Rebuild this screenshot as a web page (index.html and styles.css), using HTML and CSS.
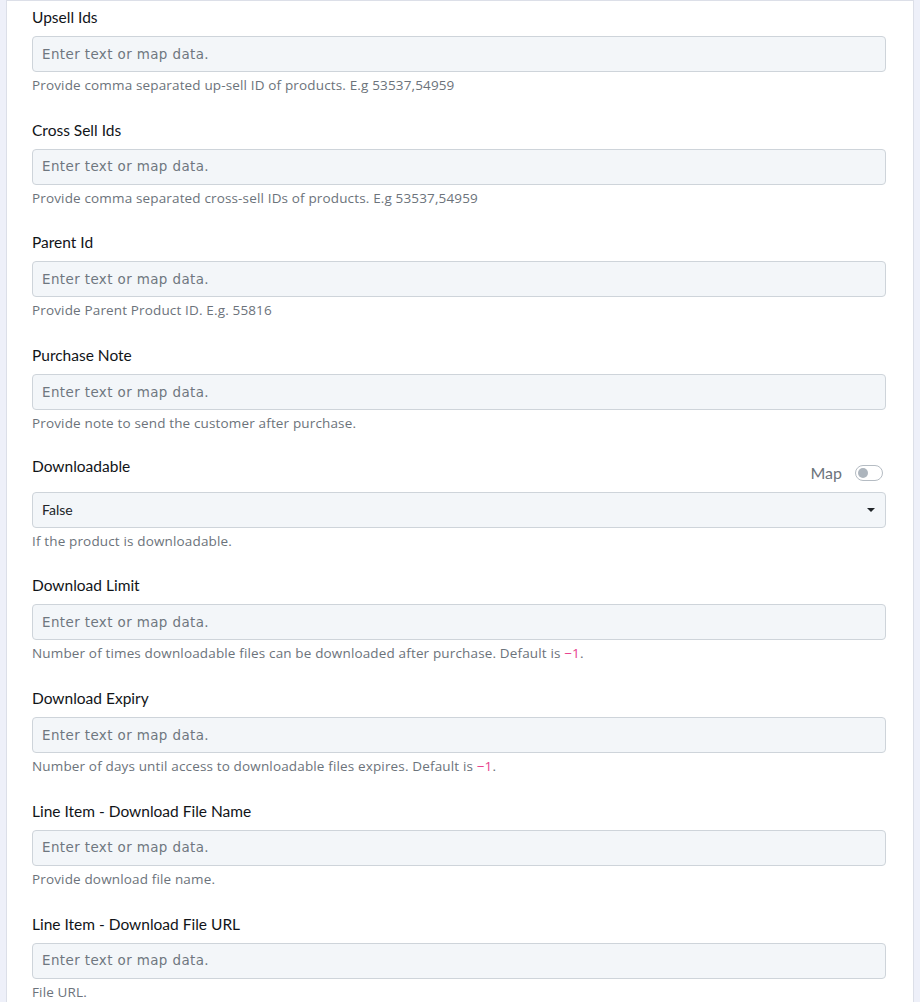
FILE: index.html
```html
<!DOCTYPE html>
<html lang="en">
<head>
<meta charset="utf-8">
<title>Product fields</title>
<link rel="stylesheet" href="styles.css">
</head>
<body>
<div class="panel">
  <form class="fields">
    <div class="field">
      <label class="field-label">Upsell Ids</label>
      <input class="field-input" type="text" placeholder="Enter text or map data.">
      <p class="field-help">Provide comma separated up-sell ID of products. E.g 53537,54959</p>
    </div>
    <div class="field">
      <label class="field-label">Cross Sell Ids</label>
      <input class="field-input" type="text" placeholder="Enter text or map data.">
      <p class="field-help">Provide comma separated cross-sell IDs of products. E.g 53537,54959</p>
    </div>
    <div class="field">
      <label class="field-label">Parent Id</label>
      <input class="field-input" type="text" placeholder="Enter text or map data.">
      <p class="field-help">Provide Parent Product ID. E.g. 55816</p>
    </div>
    <div class="field">
      <label class="field-label">Purchase Note</label>
      <input class="field-input" type="text" placeholder="Enter text or map data.">
      <p class="field-help">Provide note to send the customer after purchase.</p>
    </div>
    <div class="field field-select">
      <div class="field-head">
        <label class="field-label">Downloadable</label>
        <span class="map-switch">
          <span class="map-text">Map</span>
          <span class="switch"><span class="knob"></span></span>
        </span>
      </div>
      <div class="select-box">
        <span class="select-value">False</span>
        <span class="caret"></span>
      </div>
      <p class="field-help">If the product is downloadable.</p>
    </div>
    <div class="field">
      <label class="field-label">Download Limit</label>
      <input class="field-input" type="text" placeholder="Enter text or map data.">
      <p class="field-help">Number of times downloadable files can be downloaded after purchase. Default is <code class="code">−1</code>.</p>
    </div>
    <div class="field">
      <label class="field-label">Download Expiry</label>
      <input class="field-input" type="text" placeholder="Enter text or map data.">
      <p class="field-help">Number of days until access to downloadable files expires. Default is <code class="code">−1</code>.</p>
    </div>
    <div class="field">
      <label class="field-label">Line Item - Download File Name</label>
      <input class="field-input" type="text" placeholder="Enter text or map data.">
      <p class="field-help">Provide download file name.</p>
    </div>
    <div class="field">
      <label class="field-label">Line Item - Download File URL</label>
      <input class="field-input" type="text" placeholder="Enter text or map data.">
      <p class="field-help">File URL.</p>
    </div>
  </form>
</div>
</body>
</html>
```

FILE: styles.css
```css
html, body {
  margin: 0;
  padding: 0;
  height: 100%;
  overflow: hidden;
}

body {
  background: #eef0f9;
  font-family: Lato, "Liberation Sans", sans-serif;
  color: #212529;
}

.panel {
  margin: 0 6px 0 6px;
  background: #fff;
  border: 1px solid #dcdfe8;
  border-bottom: none;
  min-height: 100%;
  box-sizing: border-box;
  padding: 5px 27px 0 25px;
}

.fields {
  display: flex;
  flex-direction: column;
  gap: 24.7px;
}

.field {
  display: flex;
  flex-direction: column;
}

.field-label {
  display: block;
  font-size: 15.5px;
  line-height: 22px;
  font-weight: 400;
  color: #111418;
  margin-bottom: 8px;
}

.field-input {
  display: block;
  width: 100%;
  height: 36px;
  box-sizing: border-box;
  border: 1px solid #ced4da;
  border-radius: 4px;
  background: #f3f6f9;
  padding: 0 9px;
  font-family: "DejaVu Sans", Verdana, sans-serif;
  font-size: 13.45px;
  letter-spacing: 0.4px;
  color: #495057;
  outline: none;
}

.field-input::placeholder {
  color: #6f7780;
  opacity: 1;
}

.field-help {
  margin: 4px 0 0 0;
  font-family: "Open Sans", Lato, sans-serif;
  font-size: 13.5px;
  letter-spacing: 0.15px;
  line-height: 18px;
  color: #6c737b;
}

.code {
  font-family: "Open Sans", Lato, sans-serif;
  font-size: 13.5px;
  color: #e83e8c;
}

.field-head {
  display: flex;
  align-items: flex-end;
  justify-content: space-between;
  margin-bottom: 6px;
}

.field-head .field-label {
  margin: -2px 0 0 0;
  line-height: 22px;
  padding-bottom: 9px;
}

.map-switch {
  display: flex;
  align-items: center;
  gap: 13px;
  padding-bottom: 3px;
}

.map-text {
  font-size: 16px;
  line-height: 20px;
  color: #6c737b;
}

.switch {
  display: block;
  width: 28px;
  height: 16px;
  box-sizing: border-box;
  border: 1px solid #b5bcc3;
  border-radius: 8px;
  background: #fff;
  position: relative;
  margin-right: 3px;
}

.knob {
  position: absolute;
  left: 2px;
  top: 2px;
  width: 10px;
  height: 10px;
  border-radius: 50%;
  background: #adb5bd;
}

.select-box {
  display: flex;
  align-items: center;
  justify-content: space-between;
  height: 36px;
  box-sizing: border-box;
  border: 1px solid #ced4da;
  border-radius: 4px;
  background: #f3f6f9;
  padding: 0 9px;
}

.select-value {
  font-size: 14px;
  color: #212529;
}

.caret {
  width: 0;
  height: 0;
  border-left: 4px solid transparent;
  border-right: 4px solid transparent;
  border-top: 4px solid #212529;
  margin-right: 1px;
}
```
